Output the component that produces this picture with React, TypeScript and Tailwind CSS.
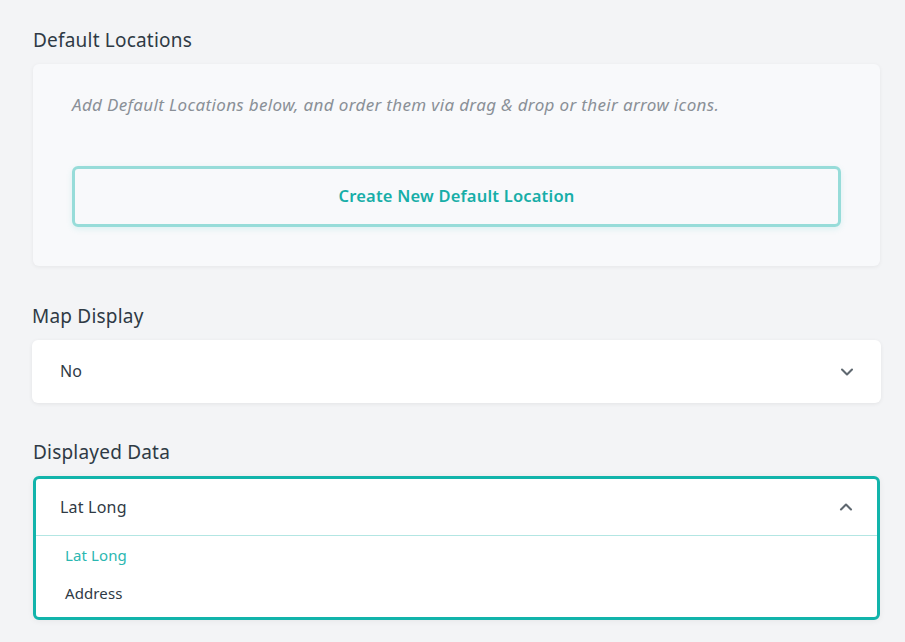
import { ChevronDown, ChevronUp } from 'lucide-react';

const font = { fontFamily: '"Noto Sans", "Open Sans", sans-serif' };

export default function App() {
  return (
    <div className="min-h-[642px] bg-[#f3f4f6] pl-8 pr-6 pt-7 text-[#2f3a45]" style={font}>
      {/* Default Locations */}
      <h2 className="text-[19px] leading-6 mb-3 ml-px tracking-[0.2px]">Default Locations</h2>
      <div className="ml-px mr-px bg-[#f8f9fb] rounded-md shadow-[0_1px_4px_rgba(0,0,0,0.06)] px-[39px] pt-[29px] pb-[39px]">
        <p className="italic text-[17px] text-[#8a9097] leading-6 tracking-[0.35px]">
          Add Default Locations below, and order them via drag &amp; drop or their arrow icons.
        </p>
        <button className="mt-[49px] w-full h-[61px] rounded-md border-[3px] border-[#97dcd9] text-[#17aea8] font-semibold text-[16.5px] tracking-[0.2px] shadow-[0_2px_6px_rgba(20,180,170,0.12)]">
          Create New Default Location
        </button>
      </div>

      {/* Map Display */}
      <h2 className="text-[19px] leading-6 mt-[38px] mb-[12px] tracking-[0.2px]">Map Display</h2>
      <div className="h-[63px] bg-white rounded-md shadow-[0_1px_4px_rgba(0,0,0,0.07)] flex items-center justify-between pl-7 pr-6">
        <span className="text-[16px] -mt-[2px]">No</span>
        <ChevronDown className="w-5 h-5 text-[#5f6870]" strokeWidth={2.5} />
      </div>

      {/* Displayed Data */}
      <h2 className="text-[19px] leading-6 mt-[37px] mb-[12px] ml-px tracking-[0.2px]">Displayed Data</h2>
      <div className="ml-px mr-px bg-white rounded-md border-[3px] border-[#12b4ab] shadow-[0_1px_6px_rgba(0,0,0,0.06)]">
        <div className="h-[57px] flex items-center justify-between pl-[24px] pr-[21px] border-b border-[#b3e6e3]">
          <span className="text-[16px] tracking-[0.2px]">Lat Long</span>
          <ChevronUp className="w-5 h-5 text-[#5f6870]" strokeWidth={2.5} />
        </div>
        <div className="pb-[5px]">
          <div className="pl-[29px] h-[38px] flex items-center text-[15px] text-[#2bb7b1] tracking-[0.1px]">Lat Long</div>
          <div className="pl-[29px] h-[38px] flex items-center text-[15px] tracking-[0.1px]">Address</div>
        </div>
      </div>
    </div>
  );
}
